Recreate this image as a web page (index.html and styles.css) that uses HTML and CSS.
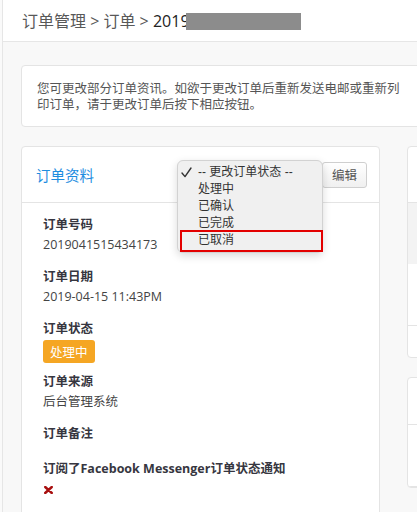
FILE: index.html
```html
<!DOCTYPE html>
<html>
	<head>
		<meta charset="utf-8">
		<title>订单管理</title>

		<link rel="stylesheet" href="styles.css">

	</head>

	<body>
		<div id="page">
			<div id="topBar">
				<div class="crumbs">订单管理 &gt; 订单 &gt; <span class="current">2019</span><span class="redact"></span></div>
			</div>

			<div id="content">
				<div class="panel notice">
					<p>您可更改部分订单资讯。如欲于更改订单后重新发送电邮或重新列印订单，请于更改订单后按下相应按钮。</p>
				</div>

				<div class="columns">
					<div class="panel orderInfo">
						<div class="panelHead">
							<h3>订单资料</h3>
							<a href="javascript:;" class="btn">编辑</a>

							<div class="statusMenu">
								<div class="item checked">
									<svg class="tick" width="11" height="11" viewBox="0 0 11 11">
										<path d="M1 6 L4 9.6 L10 1" fill="none" stroke="#333" stroke-width="1.4" stroke-linecap="round" stroke-linejoin="round"/>
									</svg>-- 更改订单状态 --
								</div>
								<div class="item">处理中</div>
								<div class="item">已确认</div>
								<div class="item">已完成</div>
								<div class="item">已取消</div>
								<div class="mark"></div>
							</div>
						</div>

						<div class="panelBody">
							<div class="field">
								<div class="label">订单号码</div>
								<div class="value">2019041515434173</div>
							</div>
							<div class="field">
								<div class="label">订单日期</div>
								<div class="value">2019-04-15 11:43PM</div>
							</div>
							<div class="field status">
								<div class="label">订单状态</div>
								<div class="value"><span class="badge">处理中</span></div>
							</div>
							<div class="field">
								<div class="label">订单来源</div>
								<div class="value">后台管理系统</div>
							</div>
							<div class="field empty">
								<div class="label">订单备注</div>
							</div>
							<div class="field">
								<div class="label">订阅了Facebook Messenger订单状态通知</div>
								<div class="value">
									<svg class="cross" width="9" height="8" viewBox="0 0 9 8">
										<path d="M1.2 1 L7.8 7 M7.8 1 L1.2 7" stroke="#a80f0f" stroke-width="2.4" stroke-linecap="round"/>
									</svg>
								</div>
							</div>
						</div>
					</div>

					<div class="side">
						<div class="panel sideCard">
							<div class="sideHead"></div>
							<div class="sideGrey"></div>
							<div class="sideRow"></div>
							<div class="sideRow last"></div>
						</div>
						<div class="panel sideCard">
							<div class="sideHead small"></div>
							<div class="sideRow"></div>
						</div>
					</div>
				</div>
			</div>
		</div>
	</body>
</html>
```

FILE: styles.css
```css
* {
	margin: 0;
	padding: 0;
	box-sizing: border-box;
	text-decoration: none;
}
html, body {
	overflow: hidden;
}
body {
	background-color: #fafafa;
	font-family: "Open Sans", "Noto Sans CJK SC", sans-serif;
	color: #444;
}
#page {
	margin-left: 2px;
	border-left: 1px solid #e6e6e6;
	background-color: #f8f8f8;
	min-height: 512px;
	width: 600px;
}
#topBar {
	height: 42px;
	background-color: #fff;
	border-bottom: 1px solid #e6e6e6;
	padding-left: 19px;
	display: flex;
	align-items: center;
}
.crumbs {
	font-size: 16px;
	line-height: 20px;
	color: #585858;
	white-space: nowrap;
}
.crumbs .current {
	color: #222;
}
.crumbs .redact {
	display: inline-block;
	width: 115px;
	height: 17px;
	margin-left: -4px;
	vertical-align: -3px;
	background-color: #8c8c8c;
}
#content {
	padding: 23px 0 0 18px;
}
.panel {
	background-color: #fff;
	border: 1px solid #e4e4e4;
	border-radius: 4px;
}
.notice {
	padding: 14px 15px;
}
.notice p {
	max-width: 372px;
	font-size: 12.5px;
	line-height: 16px;
	color: #555;
	font-family: "Noto Sans CJK SC", sans-serif;
}
.columns {
	margin-top: 19px;
	display: flex;
	gap: 27px;
	align-items: flex-start;
}
.orderInfo {
	width: 359px;
	min-height: 400px;
	flex-shrink: 0;
}
.panelHead {
	position: relative;
	height: 56px;
	border-bottom: 1px solid #e4e4e4;
	padding: 0 12px 0 14px;
	display: flex;
	align-items: center;
	justify-content: space-between;
}
.panelHead h3 {
	font-size: 14.5px;
	font-weight: normal;
	color: #1e8ddf;
}
.btn {
	display: block;
	width: 45px;
	height: 26px;
	line-height: 24px;
	text-align: center;
	font-size: 12.5px;
	color: #555;
	border: 1px solid #cfcfcf;
	border-radius: 3px;
	background: linear-gradient(#ffffff, #f0f0f0);
	font-family: "Noto Sans CJK SC", sans-serif;
}
.statusMenu {
	position: absolute;
	left: 155px;
	top: 13px;
	width: 146px;
	height: 93px;
	padding-top: 3px;
	background-color: #f0f0f0;
	border: 1px solid #d2d2d2;
	border-radius: 6px;
	box-shadow: 0 3px 9px rgba(0, 0, 0, .15);
	font-family: "Liberation Sans", "Noto Sans CJK SC", sans-serif;
	font-size: 12px;
	color: #333;
}
.statusMenu .item {
	position: relative;
	height: 17px;
	line-height: 17px;
	padding-left: 20px;
	white-space: nowrap;
}
.statusMenu .tick {
	position: absolute;
	left: 3px;
	top: 3px;
}
.statusMenu .mark {
	position: absolute;
	left: 2px;
	top: 69px;
	width: 143px;
	height: 22px;
	border: 2px solid #e30000;
}
.panelBody {
	padding: 12px 20px 0 21px;
}
.field {
	margin-bottom: 12px;
}
.field.status {
	margin-bottom: 9px;
}
.field.empty {
	margin-bottom: 15px;
}
.label {
	font-size: 12.5px;
	line-height: 20px;
	font-weight: bold;
	color: #363640;
}
.value {
	font-size: 12.5px;
	line-height: 20px;
	color: #444;
}
.badge {
	display: inline-block;
	vertical-align: top;
	margin-top: 1px;
	height: 23px;
	line-height: 23px;
	padding: 0 7px;
	border-radius: 3px;
	background-color: #f5a623;
	color: #fff;
	font-family: "Noto Sans CJK SC", sans-serif;
}
.cross {
	display: inline-block;
	vertical-align: -1px;
	margin-left: 1px;
}
.side {
	flex: 1;
}
.sideCard {
	margin-bottom: 19px;
	overflow: hidden;
}
.sideHead {
	height: 56px;
	border-bottom: 1px solid #e4e4e4;
}
.sideHead.small {
	height: 47px;
}
.sideGrey {
	height: 61px;
	background-color: #f3f3f3;
}
.sideRow {
	height: 62px;
	border-bottom: 1px solid #e4e4e4;
}
.sideRow.last {
	height: 31px;
	border-bottom: none;
}
```
